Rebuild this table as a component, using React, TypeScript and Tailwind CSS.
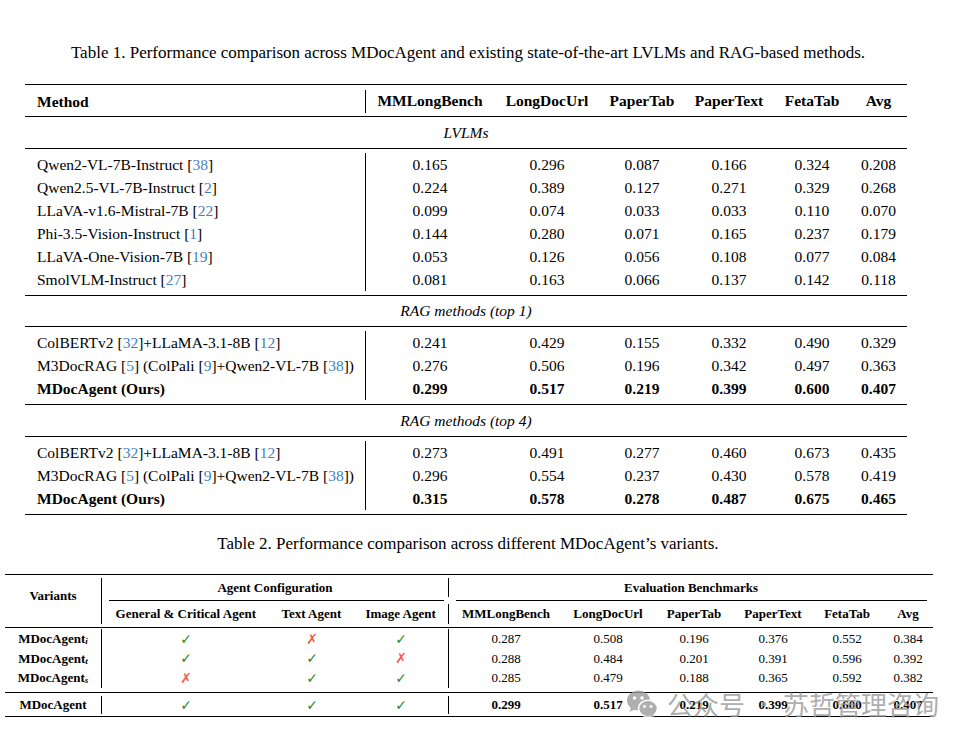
import React from "react";

const serif = { fontFamily: '"Liberation Serif", "Times New Roman", serif' };

const t1Widths = ["w-[128px]", "w-[106px]", "w-[84px]", "w-[90px]", "w-[76px]", "w-[57px]"];
const t1Heads = ["MMLongBench", "LongDocUrl", "PaperTab", "PaperText", "FetaTab", "Avg"];

type Part = { t: string; c?: boolean };
type Row1 = { name: Part[]; vals: string[]; bold?: boolean };

const Cite = ({ n }: { n: string }) => <span className="text-[#3f7fc4]">{n}</span>;

const lvlm: Row1[] = [
  { name: [{ t: "Qwen2-VL-7B-Instruct [" }, { t: "38", c: true }, { t: "]" }], vals: ["0.165", "0.296", "0.087", "0.166", "0.324", "0.208"] },
  { name: [{ t: "Qwen2.5-VL-7B-Instruct [" }, { t: "2", c: true }, { t: "]" }], vals: ["0.224", "0.389", "0.127", "0.271", "0.329", "0.268"] },
  { name: [{ t: "LLaVA-v1.6-Mistral-7B [" }, { t: "22", c: true }, { t: "]" }], vals: ["0.099", "0.074", "0.033", "0.033", "0.110", "0.070"] },
  { name: [{ t: "Phi-3.5-Vision-Instruct [" }, { t: "1", c: true }, { t: "]" }], vals: ["0.144", "0.280", "0.071", "0.165", "0.237", "0.179"] },
  { name: [{ t: "LLaVA-One-Vision-7B [" }, { t: "19", c: true }, { t: "]" }], vals: ["0.053", "0.126", "0.056", "0.108", "0.077", "0.084"] },
  { name: [{ t: "SmolVLM-Instruct [" }, { t: "27", c: true }, { t: "]" }], vals: ["0.081", "0.163", "0.066", "0.137", "0.142", "0.118"] },
];

const colbert: Part[] = [{ t: "ColBERTv2 [" }, { t: "32", c: true }, { t: "]+LLaMA-3.1-8B [" }, { t: "12", c: true }, { t: "]" }];
const m3: Part[] = [
  { t: "M3DocRAG [" }, { t: "5", c: true }, { t: "] (ColPali [" }, { t: "9", c: true }, { t: "]+Qwen2-VL-7B [" }, { t: "38", c: true }, { t: "])" },
];

const rag1: Row1[] = [
  { name: colbert, vals: ["0.241", "0.429", "0.155", "0.332", "0.490", "0.329"] },
  { name: m3, vals: ["0.276", "0.506", "0.196", "0.342", "0.497", "0.363"] },
  { name: [{ t: "MDocAgent (Ours)" }], vals: ["0.299", "0.517", "0.219", "0.399", "0.600", "0.407"], bold: true },
];
const rag4: Row1[] = [
  { name: colbert, vals: ["0.273", "0.491", "0.277", "0.460", "0.673", "0.435"] },
  { name: m3, vals: ["0.296", "0.554", "0.237", "0.430", "0.578", "0.419"] },
  { name: [{ t: "MDocAgent (Ours)" }], vals: ["0.315", "0.578", "0.278", "0.487", "0.675", "0.465"], bold: true },
];

function T1Row({ r }: { r: Row1 }) {
  return (
    <div className={`flex h-[23px] items-center ${r.bold ? "font-bold" : ""}`}>
      <div className="w-[341px] h-full border-r border-black pl-[12px] flex items-center whitespace-nowrap">
        {r.name.map((p, i) => (p.c ? <Cite key={i} n={p.t} /> : <span key={i}>{p.t}</span>))}
      </div>
      {r.vals.map((v, i) => (
        <div key={i} className={`${t1Widths[i]} text-center`}>
          {v}
        </div>
      ))}
    </div>
  );
}

function T1Block({ rows, h }: { rows: Row1[]; h: string }) {
  return (
    <div className={`${h} border-b border-black pt-[4px]`}>
      {rows.map((r, i) => (
        <T1Row key={i} r={r} />
      ))}
    </div>
  );
}

function Label({ text, h }: { text: string; h: string }) {
  return <div className={`${h} border-b border-black flex items-center justify-center italic`}>{text}</div>;
}

const t2W = ["w-[168px]", "w-[84px]", "w-[95px]", "w-[114px]", "w-[90px]", "w-[82px]", "w-[76px]", "w-[72px]", "w-[50px]"];

const sym = { fontFamily: '"DejaVu Sans", sans-serif' };
const Check = () => <span className="text-[#2c8a2a] font-bold" style={sym}>✓</span>;
const Cross = () => <span className="text-[#f0604e] font-bold" style={sym}>✗</span>;

type Row2 = { sub?: string; cfg: boolean[]; vals: string[] };
const t2rows: Row2[] = [
  { sub: "i", cfg: [true, false, true], vals: ["0.287", "0.508", "0.196", "0.376", "0.552", "0.384"] },
  { sub: "t", cfg: [true, true, false], vals: ["0.288", "0.484", "0.201", "0.391", "0.596", "0.392"] },
  { sub: "s", cfg: [false, true, true], vals: ["0.285", "0.479", "0.188", "0.365", "0.592", "0.382"] },
];

function T2Row({ r, h, bold }: { r: Row2; h: string; bold?: boolean }) {
  return (
    <div className={`flex ${h} items-center`}>
      <div className="w-[97px] h-full border-r border-black flex items-center justify-center font-bold whitespace-nowrap">
        MDocAgent
        {r.sub && <sub className="italic text-[9px]">{r.sub}</sub>}
      </div>
      {r.cfg.map((c, i) => (
        <div key={i} className={`${t2W[i]} h-full flex items-center justify-center text-[14px] leading-none ${i === 2 ? "border-r border-black" : ""}`}>
          {c ? <Check /> : <Cross />}
        </div>
      ))}
      {r.vals.map((v, i) => (
        <div key={i} className={`${t2W[i + 3]} text-center ${bold ? "font-bold" : ""}`}>
          {v}
        </div>
      ))}
    </div>
  );
}

function WeChatIcon() {
  return (
    <svg width="31" height="28" viewBox="0 0 31 28">
      <ellipse cx="11.5" cy="10.5" rx="11.5" ry="10" fill="#9c9c9c" />
      <path d="M4 17 L2.5 22 L8.5 19 Z" fill="#9c9c9c" />
      <circle cx="7.5" cy="8" r="1.7" fill="#fff" />
      <circle cx="15" cy="8" r="1.7" fill="#fff" />
      <ellipse cx="21" cy="18.5" rx="9.5" ry="8.3" fill="#9c9c9c" stroke="#fff" strokeWidth="1.6" />
      <path d="M26 24.5 L28.5 27.8 L23 25.8 Z" fill="#9c9c9c" />
      <circle cx="17.5" cy="16.5" r="1.4" fill="#fff" />
      <circle cx="24" cy="16.5" r="1.4" fill="#fff" />
    </svg>
  );
}

export default function App() {
  return (
    <div className="relative w-[964px] h-[742px] bg-white text-black overflow-hidden" style={serif}>
      <div className="mt-[42px] pr-[28px] h-[22px] leading-[22px] text-center text-[17px] whitespace-nowrap">
        Table 1. Performance comparison across MDocAgent and existing state-of-the-art LVLMs and RAG-based methods.
      </div>
      <div className="mt-[20px] ml-[25px] w-[882px] border-t border-black text-[15.5px]">
        <div className="flex h-[32px] border-b border-black font-bold items-center">
          <div className="w-[341px] h-[23px] mt-[2px] border-r border-black pl-[12px] flex items-center">Method</div>
          {t1Heads.map((h, i) => (
            <div key={i} className={`${t1Widths[i]} text-center`}>
              {h}
            </div>
          ))}
        </div>
        <Label text="LVLMs" h="h-[32px]" />
        <T1Block rows={lvlm} h="h-[147px]" />
        <Label text="RAG methods (top 1)" h="h-[31px]" />
        <T1Block rows={rag1} h="h-[78px]" />
        <Label text="RAG methods (top 4)" h="h-[32px]" />
        <T1Block rows={rag4} h="h-[78px]" />
      </div>

      <div className="mt-[18px] pr-[28px] h-[22px] leading-[22px] text-center text-[17px] whitespace-nowrap">
        Table 2. Performance comparison across different MDocAgent’s variants.
      </div>
      <div className="mt-[19px] ml-[5px] w-[928px] border-t border-black text-[13px]">
        <div className="flex h-[53px] border-b border-black font-bold">
          <div className="w-[97px] mt-[3px] mb-[3px] pb-[10px] border-r border-black flex items-center justify-center">Variants</div>
          <div className="w-[347px] flex flex-col">
            <div className="h-[25px] pt-[3px] pb-[3px]">
              <div className="h-full border-r border-black flex items-center justify-center">Agent Configuration</div>
            </div>
            <div className="h-[1px] flex">
              <div className="ml-[7px] mr-[5px] flex-1 bg-black" />
            </div>
            <div className="h-[26px] pt-[3px] pb-[3px]">
              <div className="h-full flex items-center border-r border-black">
                <div className={`${t2W[0]} text-center`}>General &amp; Critical Agent</div>
                <div className={`${t2W[1]} text-center`}>Text Agent</div>
                <div className={`${t2W[2]} text-center`}>Image Agent</div>
              </div>
            </div>
          </div>
          <div className="w-[484px] flex flex-col">
            <div className="h-[25px] flex items-center justify-center">Evaluation Benchmarks</div>
            <div className="h-[1px] flex">
              <div className="ml-[7px] mr-[6px] flex-1 bg-black" />
            </div>
            <div className="h-[26px] flex items-center">
              {t1Heads.map((h, i) => (
                <div key={i} className={`${t2W[i + 3]} text-center`}>
                  {h}
                </div>
              ))}
            </div>
          </div>
        </div>
        <div className="h-[65px] border-b border-black pt-[1px]">
          {t2rows.map((r, i) => (
            <T2Row key={i} r={r} h="h-[19.5px]" />
          ))}
        </div>
        <div className="h-[24px] border-b border-black pt-[3px]">
          <T2Row r={{ cfg: [true, true, true], vals: ["0.299", "0.517", "0.219", "0.399", "0.600", "0.407"] }} h="h-[18px]" bold />
        </div>
      </div>

      <div className="absolute left-[627px] top-[689px] flex items-center opacity-80">
        <WeChatIcon />
        <div
          className="ml-[9px] text-[26px] leading-[30px] text-[#9a9a9a] whitespace-nowrap flex items-center"
          style={{ fontFamily: '"Noto Sans CJK SC", sans-serif' }}
        >
          <span>公众号</span>
          <span className="mx-[9px] text-[20px]">·</span>
          <span>苏哲管理咨询</span>
        </div>
      </div>
    </div>
  );
}
